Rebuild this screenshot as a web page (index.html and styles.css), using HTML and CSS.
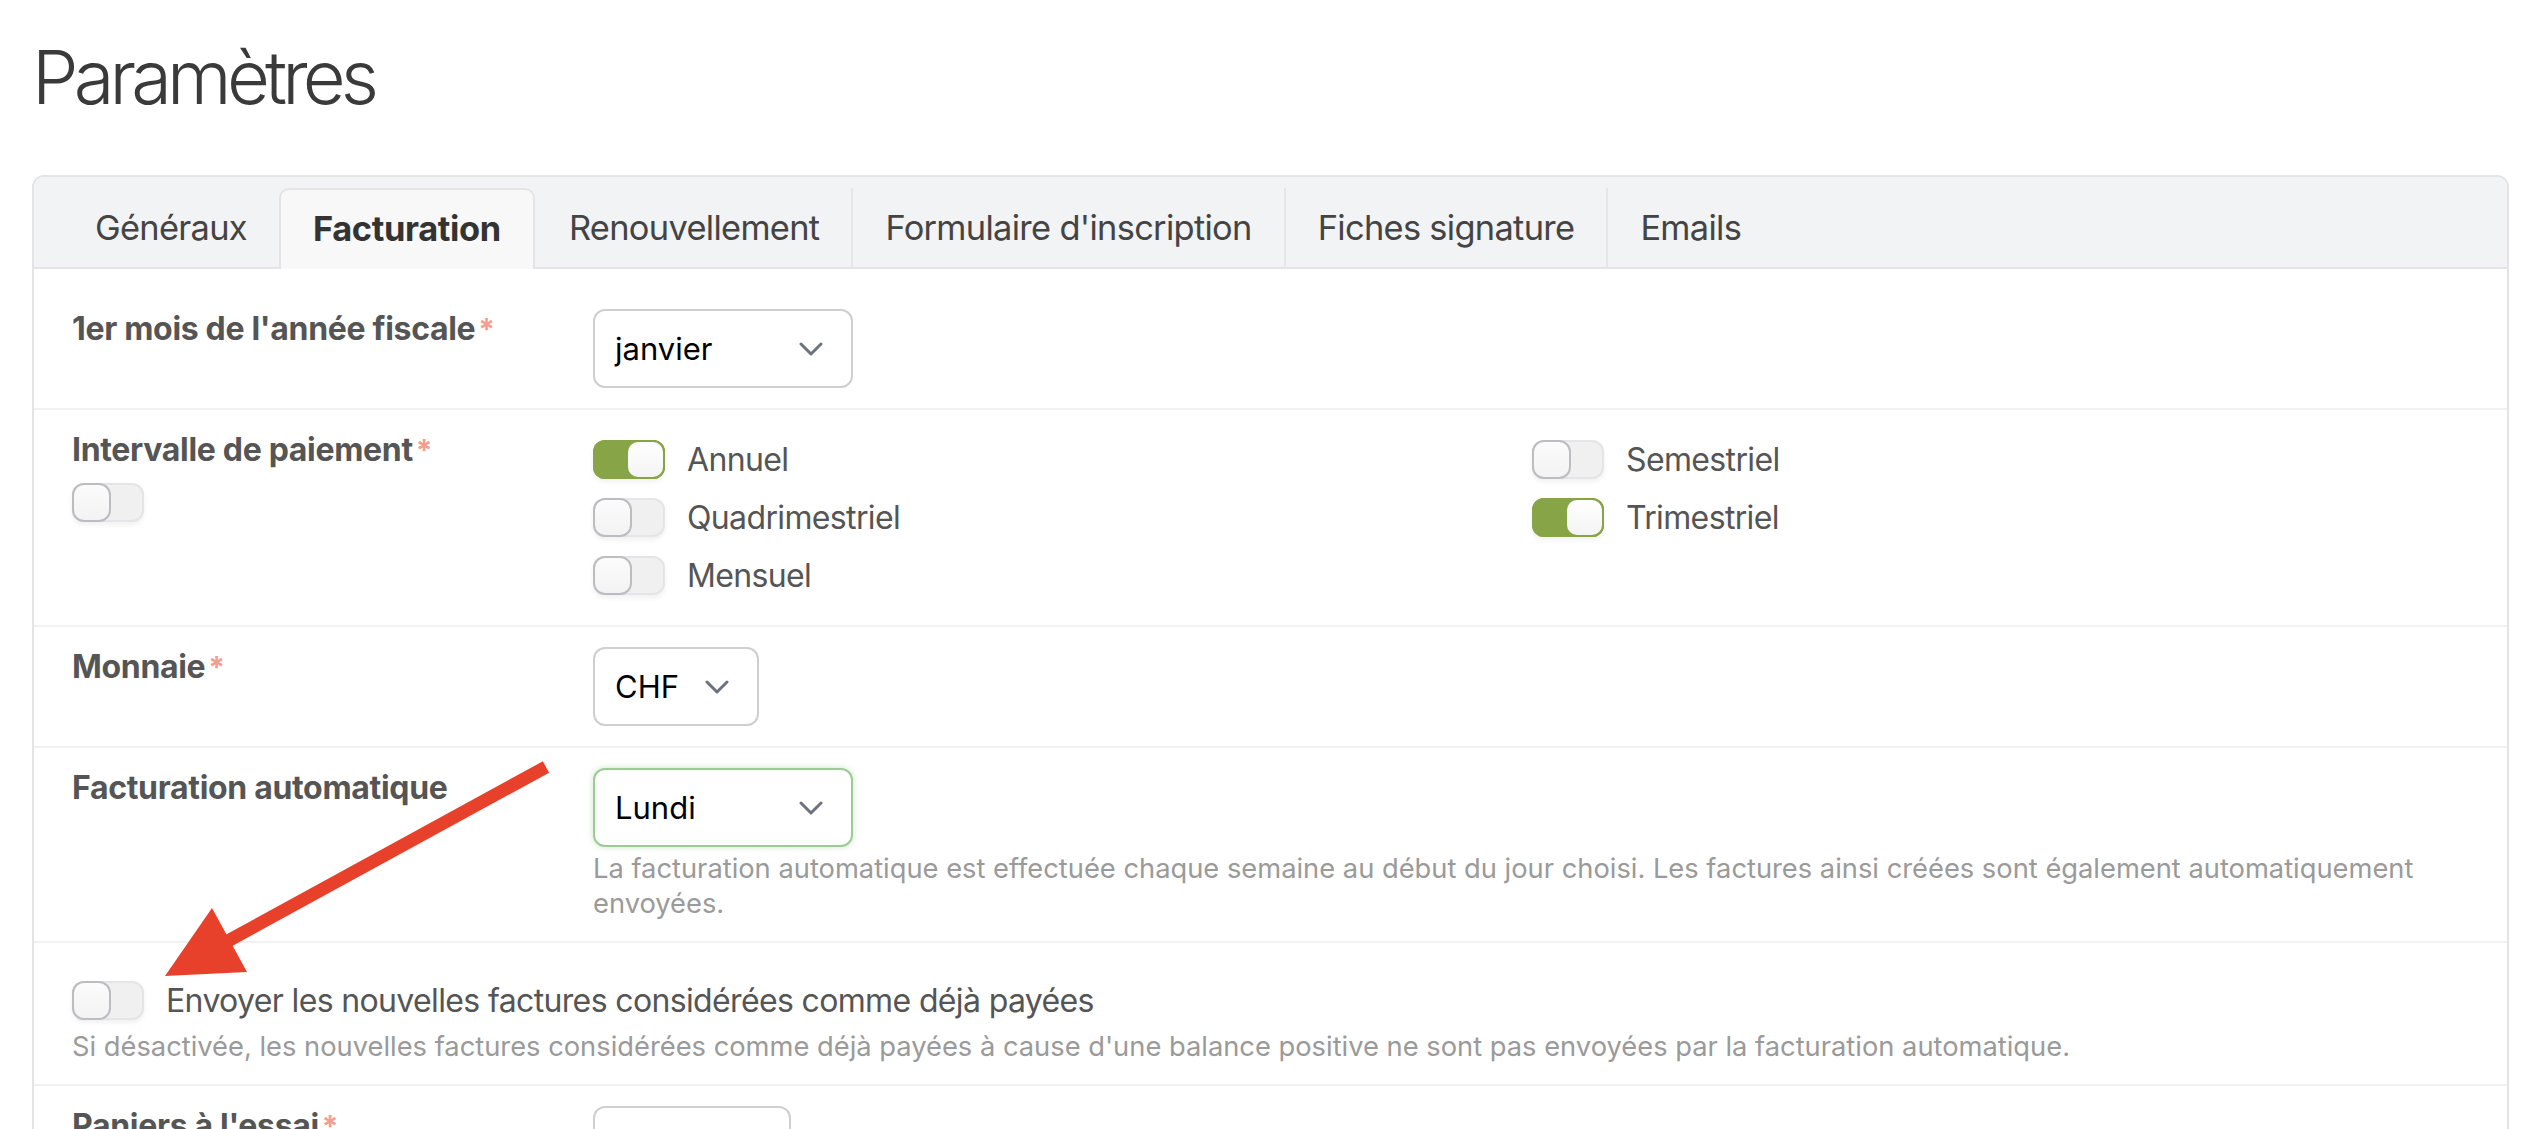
FILE: index.html
```html
<!DOCTYPE html>
<html lang="fr">
<head>
<meta charset="utf-8">
<title>Paramètres</title>
<link rel="stylesheet" href="styles.css">
</head>
<body>
<div class="page">
  <h1 class="title">Paramètres</h1>
  <div class="card">
    <div class="tabs">
      <div class="tab">Généraux</div>
      <div class="tab active">Facturation</div>
      <div class="tab">Renouvellement</div>
      <div class="tab sep">Formulaire d'inscription</div>
      <div class="tab sep">Fiches signature</div>
      <div class="tab sep">Emails</div>
    </div>
    <div class="card-body">
      <div class="row">
        <div class="label">1er mois de l'année fiscale<span class="req">*</span></div>
        <div class="field">
          <div class="select w-lg"><span>janvier</span><svg class="chev" viewBox="0 0 24 14"><path d="M2 2 L12 12 L22 2"/></svg></div>
        </div>
      </div>
      <div class="row">
        <div class="label">Intervalle de paiement<span class="req">*</span>
          <div class="toggle under"><span class="knob"></span></div>
        </div>
        <div class="field">
          <div class="checks">
            <div class="check"><div class="toggle on"><span class="knob"></span></div><span>Annuel</span></div>
            <div class="check"><div class="toggle"><span class="knob"></span></div><span>Semestriel</span></div>
            <div class="check"><div class="toggle"><span class="knob"></span></div><span>Quadrimestriel</span></div>
            <div class="check"><div class="toggle on"><span class="knob"></span></div><span>Trimestriel</span></div>
            <div class="check"><div class="toggle"><span class="knob"></span></div><span>Mensuel</span></div>
          </div>
        </div>
      </div>
      <div class="row">
        <div class="label">Monnaie<span class="req">*</span></div>
        <div class="field">
          <div class="select w-sm"><span>CHF</span><svg class="chev" viewBox="0 0 24 14"><path d="M2 2 L12 12 L22 2"/></svg></div>
        </div>
      </div>
      <div class="row">
        <div class="label">Facturation automatique</div>
        <div class="field">
          <div class="select w-lg focus"><span>Lundi</span><svg class="chev" viewBox="0 0 24 14"><path d="M2 2 L12 12 L22 2"/></svg></div>
          <p class="help">La facturation automatique est effectuée chaque semaine au début du jour choisi. Les factures ainsi créées sont également automatiquement envoyées.</p>
        </div>
      </div>
      <div class="row full">
        <div class="check single"><div class="toggle"><span class="knob"></span></div><span>Envoyer les nouvelles factures considérées comme déjà payées</span></div>
        <p class="help">Si désactivée, les nouvelles factures considérées comme déjà payées à cause d'une balance positive ne sont pas envoyées par la facturation automatique.</p>
      </div>
      <div class="row">
        <div class="label">Paniers à l'essai<span class="req">*</span></div>
        <div class="field">
          <div class="select w-md"><span>2</span><svg class="chev" viewBox="0 0 24 14"><path d="M2 2 L12 12 L22 2"/></svg></div>
        </div>
      </div>
    </div>
  </div>
  <svg class="arrow" viewBox="0 0 2548 1129" width="2548" height="1129">
    <line x1="546" y1="767" x2="226" y2="942" stroke="#e8412b" stroke-width="13"/>
    <polygon points="165,976 212,908 247,972" fill="#e8412b"/>
  </svg>
</div>
</body>
</html>
```

FILE: styles.css
```css
* { box-sizing: border-box; }

html, body {
  margin: 0;
  background: #ffffff;
}

body {
  font-family: Inter, "Noto Sans", sans-serif;
  color: #555555;
  overflow: hidden;
}

.page {
  position: relative;
  padding: 32px 39px 0 32px;
  height: 1129px;
  overflow: hidden;
}

.title {
  margin: 0 0 53px 0;
  font-size: 74px;
  line-height: 90px;
  font-weight: 300;
  color: #3a3a3a;
  letter-spacing: -0.065em;
}

.card {
  border: 2px solid #e4e4e7;
  border-radius: 12px;
  overflow: hidden;
}

.tabs {
  display: flex;
  background: #f2f3f5;
  padding: 11px 0 0 27px;
  border-bottom: 2px solid #e4e4e7;
  height: 92px;
}

.tab {
  height: 79px;
  padding: 0 32px;
  font-size: 34.4px;
  line-height: 79px;
  color: #444444;
  letter-spacing: -0.02em;
  border-left: 2px solid transparent;
  white-space: nowrap;
}

.tab.sep {
  border-left-color: #e6e6e9;
}

.tab.active {
  background: #f8f8f9;
  border: 2px solid #e4e4e7;
  border-bottom: none;
  border-radius: 10px 10px 0 0;
  margin-bottom: -2px;
  height: 81px;
  line-height: 77px;
  font-weight: 700;
  color: #333333;
  letter-spacing: -0.01em;
}

.card-body {
  padding-top: 20px;
}

.row {
  display: grid;
  grid-template-columns: 521px 1fr;
  padding: 20px 30px 20px 38px;
  border-bottom: 2px solid #f1f1f2;
}

.row.full {
  display: block;
  padding-top: 28px;
}

.label {
  font-size: 32px;
  line-height: 39px;
  font-weight: 700;
  color: #555555;
  letter-spacing: -0.01em;
}

.req {
  color: #f39e91;
  font-size: 30px;
  font-weight: 700;
  margin-left: 3px;
}

.select {
  height: 79px;
  border: 2px solid #cfcfd2;
  border-radius: 12px;
  display: flex;
  align-items: center;
  justify-content: space-between;
  padding: 0 28px 0 20px;
  font-size: 31px;
  color: #000000;
  background: #ffffff;
}

.w-lg { width: 260px; }
.w-md { width: 198px; }
.w-sm { width: 166px; }

.select.focus {
  border-color: #9ccb96;
  box-shadow: 0 0 6px rgba(120, 180, 110, 0.35);
}

.chev {
  width: 24px;
  height: 14px;
  fill: none;
  stroke: #6b7280;
  stroke-width: 3;
  stroke-linecap: round;
  stroke-linejoin: round;
}

.checks {
  display: grid;
  grid-template-columns: 939px 1fr;
  padding-bottom: 1px;
}

.check {
  display: flex;
  align-items: center;
  gap: 22px;
  height: 58px;
  font-size: 32px;
  color: #555555;
  letter-spacing: -0.02em;
}

.toggle {
  width: 72px;
  height: 39px;
  flex: none;
  border-radius: 12px;
  background: #f0f0f1;
  box-shadow: inset 0 0 0 2px #e5e5e8, 0 3px 5px rgba(0, 0, 0, 0.06);
  display: flex;
}

.toggle .knob {
  width: 39px;
  height: 39px;
  border: 2px solid #bdbdc1;
  border-radius: 12px;
  background: linear-gradient(#fbfbfb, #f3f3f4);
}

.toggle.on {
  background: #87a546;
  box-shadow: inset 0 0 0 2px #87a546, 0 3px 5px rgba(0, 0, 0, 0.06);
  justify-content: flex-end;
}

.toggle.on .knob {
  border-color: #87a546;
  background: linear-gradient(#ffffff, #f4f4f4);
}

.toggle.under {
  margin-top: 13px;
}

.help {
  margin: 4px 0 0 0;
  font-size: 27.3px;
  line-height: 35px;
  color: #9a9a9a;
}

.row.full .help {
  margin-top: 0;
}

.arrow {
  position: absolute;
  top: 0;
  left: 0;
  pointer-events: none;
}
```
